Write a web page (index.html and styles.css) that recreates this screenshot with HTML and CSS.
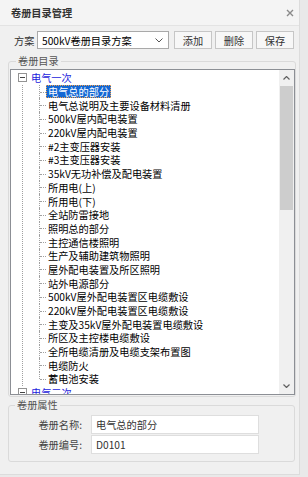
FILE: index.html
```html
<!DOCTYPE html>
<html lang="zh-CN">
<head>
    <meta charset="UTF-8">
    <meta name="viewport" content="width=device-width, initial-scale=1.0">
    <title>卷册目录管理</title>
    <link rel="stylesheet" href="styles.css">
</head>
<body>
    <div class="dialog">
        <div class="titlebar">
            <span class="title">卷册目录管理</span>
            <svg class="close" width="8" height="8" viewBox="0 0 8 8"><path d="M1 1L7 7M7 1L1 7" stroke="#8a8a8a" stroke-width="1.4"/></svg>
        </div>

        <div class="toolbar">
            <label class="toolbar-label">方案</label>
            <div class="select">
                <span>500kV卷册目录方案</span>
                <svg width="8" height="5" viewBox="0 0 8 5"><path d="M0.5 0.5L4 4L7.5 0.5" fill="none" stroke="#555" stroke-width="1"/></svg>
            </div>
            <button class="btn">添加</button>
            <button class="btn">删除</button>
            <button class="btn">保存</button>
        </div>

        <fieldset class="group group-tree">
            <legend>卷册目录</legend>
            <div class="tree-box">
                <div class="tree">
                    <div class="node root">
                        <span class="toggle"></span>
                        <span class="root-label">电气一次</span>
                    </div>
                    <div class="children">
                        <div class="node leaf"><span class="label selected">电气总的部分</span></div>
                        <div class="node leaf"><span class="label">电气总说明及主要设备材料清册</span></div>
                        <div class="node leaf"><span class="label">500kV屋内配电装置</span></div>
                        <div class="node leaf"><span class="label">220kV屋内配电装置</span></div>
                        <div class="node leaf"><span class="label">#2主变压器安装</span></div>
                        <div class="node leaf"><span class="label">#3主变压器安装</span></div>
                        <div class="node leaf"><span class="label">35kV无功补偿及配电装置</span></div>
                        <div class="node leaf"><span class="label">所用电(上)</span></div>
                        <div class="node leaf"><span class="label">所用电(下)</span></div>
                        <div class="node leaf"><span class="label">全站防雷接地</span></div>
                        <div class="node leaf"><span class="label">照明总的部分</span></div>
                        <div class="node leaf"><span class="label">主控通信楼照明</span></div>
                        <div class="node leaf"><span class="label">生产及辅助建筑物照明</span></div>
                        <div class="node leaf"><span class="label">屋外配电装置及所区照明</span></div>
                        <div class="node leaf"><span class="label">站外电源部分</span></div>
                        <div class="node leaf"><span class="label">500kV屋外配电装置区电缆敷设</span></div>
                        <div class="node leaf"><span class="label">220kV屋外配电装置区电缆敷设</span></div>
                        <div class="node leaf"><span class="label">主变及35kV屋外配电装置电缆敷设</span></div>
                        <div class="node leaf"><span class="label">所区及主控楼电缆敷设</span></div>
                        <div class="node leaf"><span class="label">全所电缆清册及电缆支架布置图</span></div>
                        <div class="node leaf"><span class="label">电缆防火</span></div>
                        <div class="node leaf last"><span class="label">蓄电池安装</span></div>
                    </div>
                    <div class="node root">
                        <span class="toggle"></span>
                        <span class="root-label">电气二次</span>
                    </div>
                </div>
                <div class="scrollbar">
                    <div class="sb-arrow">
                        <svg width="7" height="4" viewBox="0 0 7 4"><path d="M0.5 3.5L3.5 0.5L6.5 3.5" fill="none" stroke="#606060" stroke-width="1.2"/></svg>
                    </div>
                    <div class="sb-track">
                        <div class="sb-thumb"></div>
                    </div>
                    <div class="sb-arrow">
                        <svg width="7" height="4" viewBox="0 0 7 4"><path d="M0.5 0.5L3.5 3.5L6.5 0.5" fill="none" stroke="#606060" stroke-width="1.2"/></svg>
                    </div>
                </div>
            </div>
        </fieldset>

        <fieldset class="group group-props">
            <legend>卷册属性</legend>
            <div class="props">
                <label class="prop-label">卷册名称:</label>
                <div class="input">电气总的部分</div>
                <label class="prop-label">卷册编号:</label>
                <div class="input">D0101</div>
            </div>
        </fieldset>
    </div>
</body>
</html>
```

FILE: styles.css
```css
* {
    box-sizing: border-box;
}
html {
    background: #e9e9e9;
}
body {
    margin: 0;
    font-family: "Noto Sans CJK SC", sans-serif;
    font-size: 10.2px;
    color: #000;
}
.dialog {
    width: 300px;
    height: 475px;
    background: #f0f0f0;
    border-right: 1px solid #dcdcdc;
    border-bottom: 1px solid #dcdcdc;
}
.titlebar {
    height: 26px;
    display: flex;
    align-items: center;
    justify-content: space-between;
    padding: 0 5px 0 11px;
    background: #f4f4f4;
    border-bottom: 1px solid #e3e3e3;
}
.title {
    font-weight: bold;
    color: #333;
}
.toolbar {
    display: flex;
    align-items: center;
    height: 18px;
    margin-top: 5px;
    padding-left: 14px;
}
.toolbar-label {
    color: #333;
    width: 23px;
}
.select {
    width: 132px;
    height: 18px;
    display: flex;
    align-items: center;
    justify-content: space-between;
    padding: 0 5px 0 4px;
    background: #fff;
    border: 1px solid #a9a9a9;
}
.btn {
    width: 38px;
    height: 18px;
    margin-left: 3px;
    padding: 0;
    font-family: inherit;
    font-size: 10.2px;
    color: #333;
    background: #f7f7f7;
    border: 1px solid #c6c6c6;
}
.select + .btn {
    margin-left: 5px;
}
.group {
    margin: 0 0 0 8px;
    border: 1px solid #dadada;
    border-radius: 3px;
}
.group legend {
    margin-left: 6px;
    padding: 0 2px;
    line-height: 12px;
    color: #555;
}
.group-tree {
    width: 288px;
    margin-top: 6px;
    padding: 2px 0 1px 1px;
}
.tree-box {
    height: 326px;
    display: flex;
    background: #fff;
    border: 1px solid #8c8f95;
    overflow: hidden;
}
.tree {
    flex: 1;
    padding: 1px 0 0 7px;
    overflow: hidden;
}
.node {
    height: 13.7px;
    display: flex;
    align-items: center;
    white-space: nowrap;
}
.toggle {
    width: 9px;
    height: 9px;
    border: 1px solid #939393;
    position: relative;
    background: #fff;
}
.toggle::after {
    content: "";
    position: absolute;
    left: 1px;
    top: 3px;
    width: 5px;
    height: 1px;
    background: #444;
}
.root-label {
    margin-left: 4px;
    line-height: 12px;
    color: #1c1cdc;
}
.children {
    margin-left: 4px;
    border-left: 1px dotted #a0a0a0;
}
.leaf {
    position: relative;
}
.leaf::before {
    content: "";
    position: absolute;
    left: 16px;
    top: 0;
    bottom: 0;
    border-left: 1px dotted #a0a0a0;
}
.leaf.last::before {
    bottom: 50%;
}
.leaf::after {
    content: "";
    position: absolute;
    left: 17px;
    top: 50%;
    width: 6px;
    border-top: 1px dotted #a0a0a0;
}
.label {
    margin-left: 23px;
    padding: 0 2px;
    line-height: 13px;
}
.label.selected {
    background: #1468d4;
    color: #fff;
    outline: 1px dotted #f3a14a;
    outline-offset: -1px;
}
.scrollbar {
    width: 15px;
    display: flex;
    flex-direction: column;
    background: #f0f0f0;
}
.sb-arrow {
    height: 16px;
    display: flex;
    align-items: center;
    justify-content: center;
}
.sb-track {
    flex: 1;
    padding: 0 1px;
}
.sb-thumb {
    height: 124px;
    background: #cdcdcd;
}
.group-props {
    width: 287px;
    margin-top: 2px;
    padding: 4px 0 7px 0;
}
.props {
    display: grid;
    grid-template-columns: 73px 168px;
    grid-auto-rows: 19px;
    column-gap: 9px;
    row-gap: 1px;
    padding-left: 0;
}
.prop-label {
    text-align: right;
    align-self: center;
    color: #444;
}
.input {
    display: flex;
    align-items: center;
    padding-left: 4px;
    background: #fff;
    border: 1px solid #dedede;
    color: #333;
}
```
